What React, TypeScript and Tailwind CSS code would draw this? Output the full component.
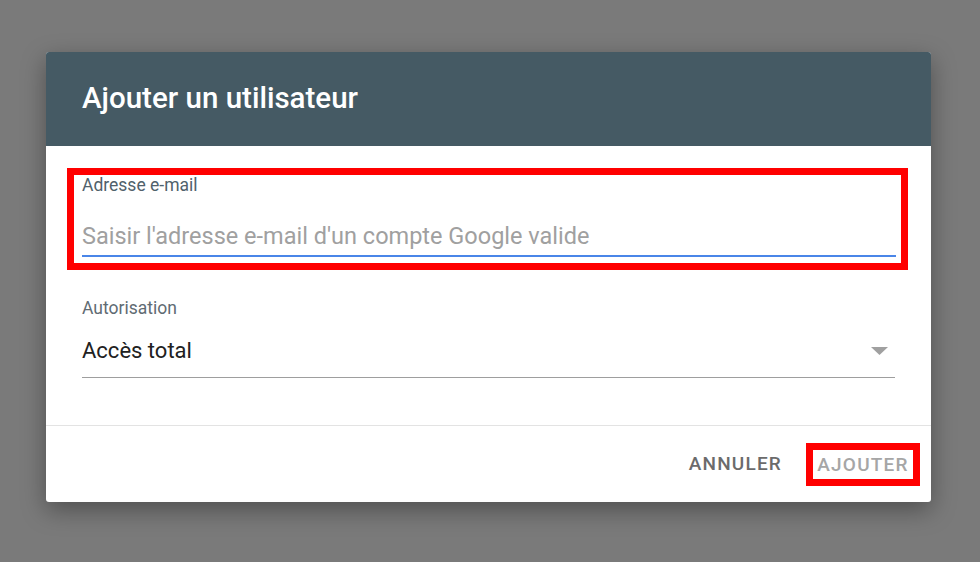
export default function App() {
  return (
    <div className="w-[980px] h-[562px] bg-[#7a7a7a] pt-[52px] pl-[46px] overflow-hidden font-['Roboto',_'Liberation_Sans',_sans-serif]">
      <div className="w-[885px] h-[450px] bg-white rounded-[3px] shadow-[0_8px_24px_rgba(0,0,0,0.35)] overflow-hidden flex flex-col">
        {/* Header */}
        <div className="h-[94px] bg-[#455a64] pl-[36px] flex items-center shrink-0">
          <h1 className="text-white text-[29.5px] font-medium leading-none pb-[1px]">Ajouter un utilisateur</h1>
        </div>

        {/* Body */}
        <div className="h-[279px] shrink-0 pt-[22px]">
          {/* Email field (highlighted) */}
          <div className="ml-[21px] mr-[23px] h-[102px] border-[7px] border-[#ff0000] pl-[8px] pr-[5px] pt-[1px]">
            <div className="text-[17.5px] leading-[18px] text-[#50616b]">Adresse e-mail</div>
            <div className="mt-[28px] text-[23.5px] leading-[28px] text-[#a0a0a0]">
              Saisir l'adresse e-mail d'un compte Google valide
            </div>
            <div className="mt-[5px] h-[2px] bg-[#4a86e8]" />
          </div>

          {/* Permission select */}
          <div className="mx-[36px] mt-[29px]">
            <div className="text-[17.5px] leading-[18px] text-[#5f6b73]">Autorisation</div>
            <div className="mt-[21px] flex items-center justify-between h-[26px]">
              <span className="text-[22px] leading-[26px] text-[#212121]">Accès total</span>
              <svg width="17" height="8" viewBox="0 0 17 8" className="mr-[7px]">
                <path d="M0 0H17L8.5 8Z" fill="#a0a0a0" />
              </svg>
            </div>
            <div className="mt-[13px] h-px bg-[#9e9e9e]" />
          </div>
        </div>

        {/* Footer */}
        <div className="flex-1 border-t border-[#e3e3e3] flex items-center justify-end pr-[11px] pt-[1px]">
          <button className="text-[19px] font-medium tracking-[1.2px] text-[#6b6b6b] mr-[24px]">ANNULER</button>
          <div className="w-[114px] h-[43px] border-[7px] border-[#ff0000] flex items-center justify-center">
            <button className="text-[19px] font-medium tracking-[1.2px] text-[#a6a6a6] leading-none">AJOUTER</button>
          </div>
        </div>
      </div>
    </div>
  );
}
